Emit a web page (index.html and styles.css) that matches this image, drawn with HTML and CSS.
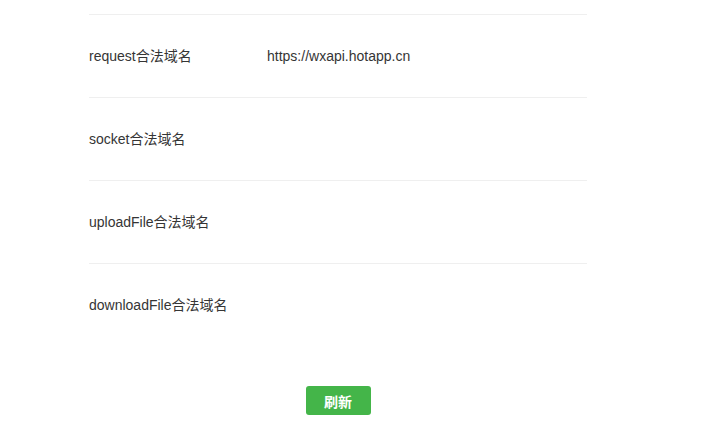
FILE: index.html
```html
<!DOCTYPE html>
<html lang="zh-CN">
<head>
<meta charset="utf-8">
<title>服务器域名</title>
<link rel="stylesheet" href="styles.css">
</head>
<body>
<div class="page">
  <ul class="domain-list">
    <li class="domain-item">
      <span class="label">request合法域名</span>
      <span class="value">https://wxapi.hotapp.cn</span>
    </li>
    <li class="domain-item">
      <span class="label">socket合法域名</span>
      <span class="value"></span>
    </li>
    <li class="domain-item">
      <span class="label">uploadFile合法域名</span>
      <span class="value"></span>
    </li>
    <li class="domain-item">
      <span class="label">downloadFile合法域名</span>
      <span class="value"></span>
    </li>
  </ul>
  <div class="actions">
    <button class="btn-primary" type="button">刷新</button>
  </div>
</div>
</body>
</html>
```

FILE: styles.css
```css
html, body {
  margin: 0;
  padding: 0;
  background: #ffffff;
}

body {
  font-family: "Liberation Sans", "Noto Sans CJK SC", sans-serif;
  font-size: 14px;
  color: #353535;
}

.page {
  width: 498px;
  margin-left: 89px;
  padding-top: 14px;
}

.domain-list {
  list-style: none;
  margin: 0;
  padding: 0;
}

.domain-item {
  display: flex;
  align-items: center;
  height: 82px;
  border-top: 1px solid #efefef;
  line-height: 20px;
}

.label {
  width: 178px;
  flex: none;
}

.value {
  flex: 1;
}

.actions {
  display: flex;
  justify-content: center;
  margin-top: 40px;
}

.btn-primary {
  width: 65px;
  height: 29px;
  padding: 0;
  border: none;
  border-radius: 3px;
  background: #44b549;
  color: #ffffff;
  font-family: "Liberation Sans", "Noto Sans CJK SC", sans-serif;
  font-size: 14px;
  font-weight: bold;
  cursor: pointer;
}
```
